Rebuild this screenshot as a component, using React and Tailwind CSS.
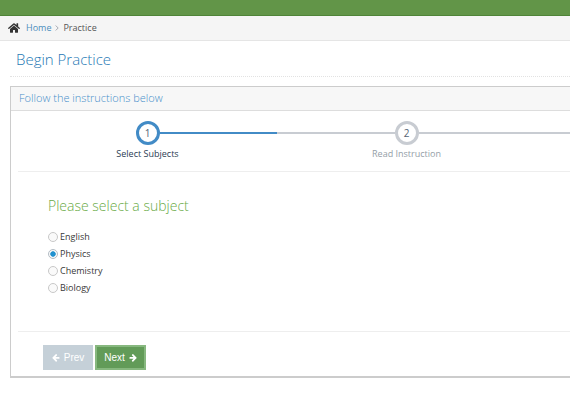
import { useState } from "react";
import { FaHome } from "react-icons/fa";

const subjects = ["English", "Physics", "Chemistry", "Biology"];

function Arrow({ className }) {
  return (
    <svg viewBox="64 160 1500 1640" fill="currentColor" aria-hidden="true" className={className}>
      <path d="M1536 896v128q0 53-32.5 90.5t-84.5 37.5H715l293 294q38 36 38 90t-38 90l-75 76q-37 37-90 37-52 0-91-37L101 1050q-37-37-37-90 0-52 37-91l651-650q38-38 91-38 52 0 90 38l75 74q38 38 38 91t-38 91L715 768h704q52 0 84.5 37.5T1536 896z" />
    </svg>
  );
}

function Breadcrumb() {
  return (
    <nav aria-label="Breadcrumb" className="flex h-[25px] items-center border-b border-[#e5e5e5] bg-[#f5f5f5] pl-2 text-[9px]">
      <FaHome className="size-3 text-[#333333]" />
      <a href="#home" className="ml-[6px] text-[#4c8fbd]">Home</a>
      <svg viewBox="0 0 4 6" className="mx-1 h-[6px] w-1" fill="none" stroke="#a5a9b2">
        <path d="M0.7 0.5 3.2 3 0.7 5.5" />
      </svg>
      <span className="text-[#555555]">Practice</span>
    </nav>
  );
}

function Steps() {
  return (
    <ol className="flex overflow-hidden border-b border-[#eeeeee] pt-[10px] pb-[11px] text-[9px]">
      <li className="w-[259px] shrink-0 text-center">
        <div className="flex h-6 items-center">
          <span className="flex-1" />
          <span className="flex size-6 items-center justify-center rounded-full border-3 border-[#428bc6] bg-white text-[10px] text-[#546474]">1</span>
          <span className="h-[2px] flex-1 bg-[#428bc6]" />
        </div>
        <div className="mt-[2px] leading-[13px] text-[#2b3d53]">Select Subjects</div>
      </li>
      <li className="w-[259px] shrink-0 text-center">
        <div className="flex h-6 items-center">
          <span className="h-[2px] flex-1 bg-[#c8ccd2]" />
          <span className="flex size-6 items-center justify-center rounded-full border-3 border-[#c8ccd2] bg-white text-[10px] text-[#546474]">2</span>
          <span className="h-[2px] flex-1 bg-[#c8ccd2]" />
        </div>
        <div className="mt-[2px] leading-[13px] text-[#949ea7]">Read Instruction</div>
      </li>
      <li className="flex h-6 flex-1 items-center">
        <span className="h-[2px] flex-1 bg-[#c8ccd2]" />
      </li>
    </ol>
  );
}

export default function App() {
  const [subject, setSubject] = useState("Physics");

  return (
    <div className="overflow-hidden bg-white font-['Open_Sans',sans-serif] text-[#393939]">
      <header className="h-4 border-b border-[#4f8438] bg-[#629548]" />
      <Breadcrumb />
      <main className="pt-2 pb-6 pl-[10px]">
        <h1 className="h-7 border-b border-dotted border-[#e2e2e2] pl-[6px] text-[15px] leading-5 font-light text-[#2679b5]">
          Begin Practice
        </h1>
        <section className="mt-[9px] border-t border-b-2 border-l border-[#cccccc]">
          <h2 className="h-6 border-b border-[#dddddd] bg-[#f7f7f7] pl-2 text-[11px] leading-[22px] font-light text-[#478fca]">
            Follow the instructions below
          </h2>
          <form className="pl-[7px]" onSubmit={(event) => event.preventDefault()}>
            <Steps />
            <fieldset className="h-[159px] pt-[24px] pl-[30px]">
              <legend className="float-left w-full text-[14px] leading-5 font-light text-[#69aa46]">
                Please select a subject
              </legend>
              <div className="clear-both pt-[12px]">
                {subjects.map((name) => (
                  <label key={name} className="flex h-[17px] w-fit items-center gap-[2px] text-[9px]">
                    <input
                      type="radio"
                      name="subject"
                      value={name}
                      checked={subject === name}
                      onChange={() => setSubject(name)}
                      className="size-[10px] appearance-none rounded-full border border-[#c8c8c8] bg-[#fafafa] checked:border-[#b3bcc4] checked:bg-[radial-gradient(circle,#2091cf_42%,#fafafa_54%)]"
                    />
                    {name}
                  </label>
                ))}
              </div>
            </fieldset>
            <div className="flex gap-[2px] border-t border-[#eeeeee] pt-[13px] pb-[6px] pl-[25px] font-['Liberation_Sans',sans-serif] text-[10px] text-white">
              <button type="button" disabled className="flex h-[25px] w-[50px] items-center justify-center gap-1 bg-[#c5d0d8]">
                <Arrow className="size-2" />
                Prev
              </button>
              <button type="submit" className="flex h-[25px] w-[51px] items-center justify-center gap-1 border-2 border-[#87b87f] bg-[#629b58]">
                Next
                <Arrow className="size-2 -scale-x-100" />
              </button>
            </div>
          </form>
        </section>
      </main>
    </div>
  );
}
